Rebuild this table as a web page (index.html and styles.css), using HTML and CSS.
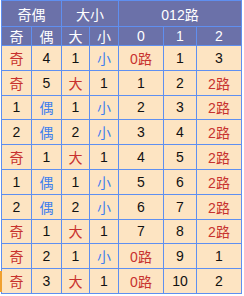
FILE: index.html
```html
<!DOCTYPE html>
<html>
<head>
<meta charset="utf-8">
<link rel="stylesheet" href="styles.css">
</head>
<body>
<div class="marker"></div>
<div class="grid">
  <div class="h span2">奇偶</div>
  <div class="h span2">大小</div>
  <div class="h span3">012路</div>
  <div class="h">奇</div><div class="h">偶</div><div class="h">大</div><div class="h">小</div><div class="h">0</div><div class="h">1</div><div class="h">2</div>

  <div class="c r">奇</div><div class="c">4</div><div class="c">1</div><div class="c b">小</div><div class="c r">0路</div><div class="c">1</div><div class="c">3</div>
  <div class="c r">奇</div><div class="c">5</div><div class="c r">大</div><div class="c">1</div><div class="c">1</div><div class="c">2</div><div class="c r">2路</div>
  <div class="c">1</div><div class="c b">偶</div><div class="c">1</div><div class="c b">小</div><div class="c">2</div><div class="c">3</div><div class="c r">2路</div>
  <div class="c">2</div><div class="c b">偶</div><div class="c">2</div><div class="c b">小</div><div class="c">3</div><div class="c">4</div><div class="c r">2路</div>
  <div class="c r">奇</div><div class="c">1</div><div class="c r">大</div><div class="c">1</div><div class="c">4</div><div class="c">5</div><div class="c r">2路</div>
  <div class="c">1</div><div class="c b">偶</div><div class="c">1</div><div class="c b">小</div><div class="c">5</div><div class="c">6</div><div class="c r">2路</div>
  <div class="c">2</div><div class="c b">偶</div><div class="c">2</div><div class="c b">小</div><div class="c">6</div><div class="c">7</div><div class="c r">2路</div>
  <div class="c r">奇</div><div class="c">1</div><div class="c r">大</div><div class="c">1</div><div class="c">7</div><div class="c">8</div><div class="c r">2路</div>
  <div class="c r">奇</div><div class="c">2</div><div class="c">1</div><div class="c b">小</div><div class="c r">0路</div><div class="c">9</div><div class="c">1</div>
  <div class="c r">奇</div><div class="c">3</div><div class="c r">大</div><div class="c">1</div><div class="c r">0路</div><div class="c">10</div><div class="c">2</div>
</div>
</body>
</html>
```
FILE: styles.css
```css
html, body {
  margin: 0;
  padding: 0;
  background: #ffffff;
}
body {
  padding-left: 1px;
  position: relative;
  font-family: "Liberation Sans", "Noto Sans CJK SC", sans-serif;
  font-size: 14px;
}
.grid {
  display: grid;
  width: 241px;
  height: 294px;
  box-sizing: border-box;
  grid-template-columns: 29px 29px 27px 28px 44px 32px 44px;
  grid-template-rows: 25px 18px repeat(10, 1fr);
  gap: 1px;
  padding: 1px;
  background: #5f8ff0;
}
.h {
  background: #6b71a9;
  color: #ffffff;
  display: flex;
  align-items: center;
  justify-content: center;
}
.span2 { grid-column: span 2; }
.span3 { grid-column: span 3; }
.c {
  background: #fde4c2;
  color: #111111;
  display: flex;
  align-items: center;
  justify-content: center;
}
.r { color: #c8322e; }
.b { color: #3f7fee; }
.marker {
  position: absolute;
  left: 0;
  top: 271px;
  width: 2px;
  height: 21px;
  background: #f0a030;
}
```
